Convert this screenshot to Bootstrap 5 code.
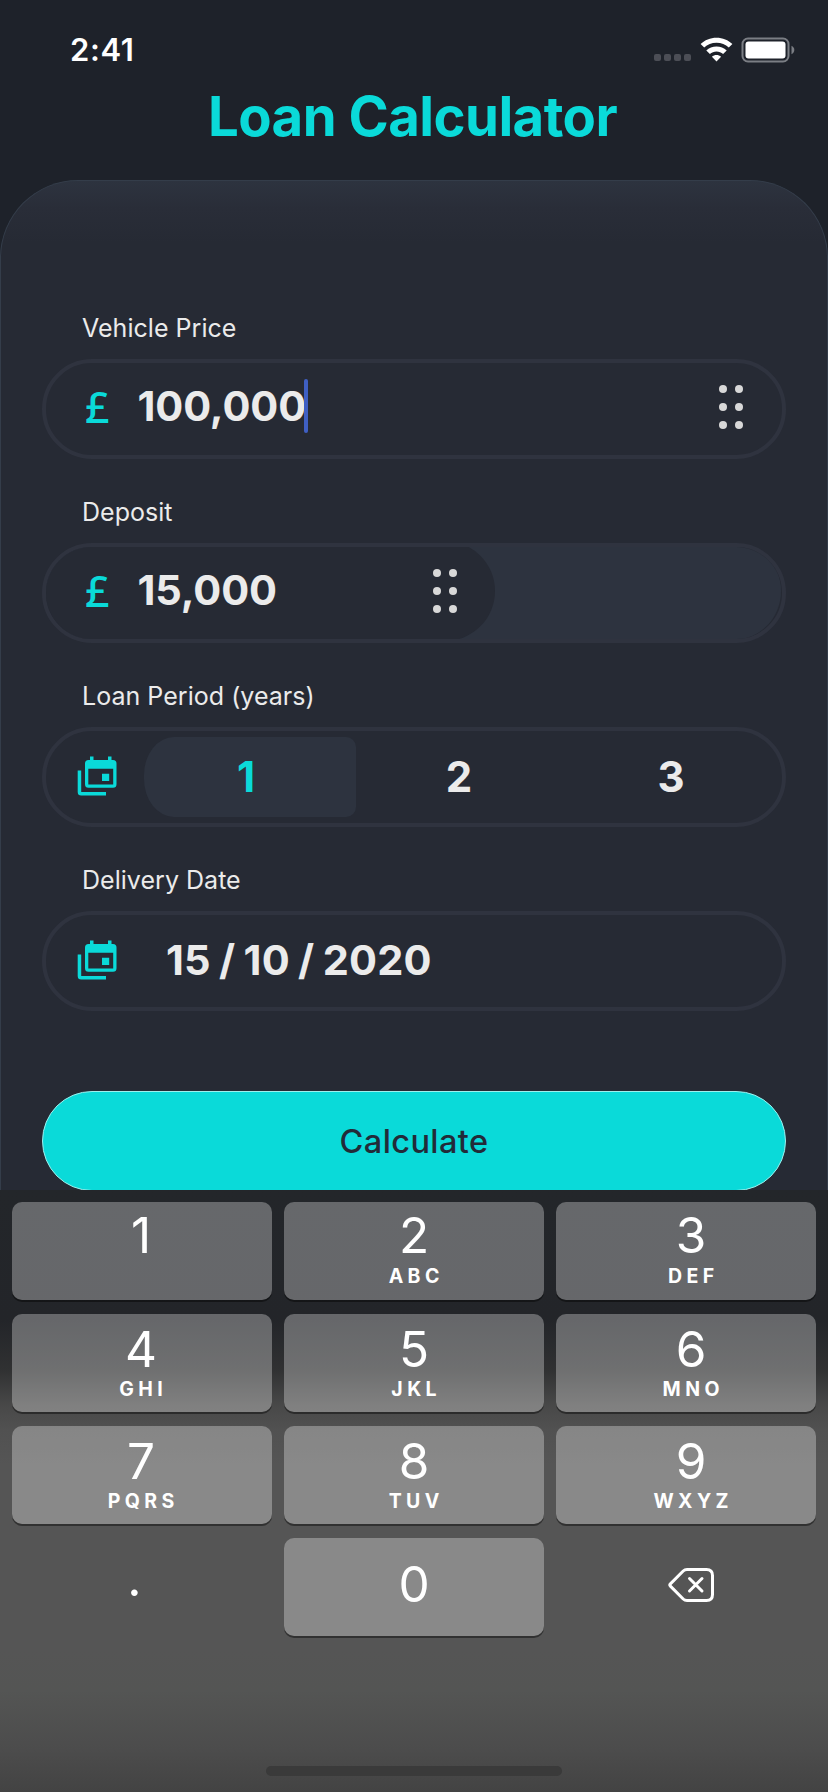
<!DOCTYPE html>
<html lang="en">
<head>
<meta charset="utf-8">
<meta name="viewport" content="width=device-width, initial-scale=1">
<title>Loan Calculator</title>
<link href="https://cdn.jsdelivr.net/npm/bootstrap@5.3.0/dist/css/bootstrap.min.css" rel="stylesheet">
<style>
  body { background: #1e222a; font-family: Inter, "Liberation Sans", sans-serif; color: #ebebeb; }
  .phone { height: 1792px; }
  .status-bar { height: 86px; padding: 14px 33px 0 70px; color: #fff; }
  .clock { font-size: 31px; font-weight: 600; line-height: 40px; letter-spacing: .6px; }
  .signal { gap: 3px; margin: 15px 9px 0 0; }
  .signal i { width: 7px; height: 7px; border-radius: 2px; background: #4c4e56; }
  .app-title { height: 94px; font-size: 54.5px; font-weight: 700; line-height: 60px; color: #0adad9; letter-spacing: -.55px; padding-right: 3px; }
  .sheet { border: 1px solid #343d4a; border-bottom: 0; border-radius: 78px 78px 0 0; padding: 131px 41px 0; min-height: 0;
    background: #262a34 linear-gradient(#2d333f 0, #292d38 28px, #262a34 62px) no-repeat; }
  .field-label { font-size: 25px; line-height: 32px; margin: 0 0 15px 40px; letter-spacing: .03px; }
  .field { margin-bottom: 37px; }
  .field-box { height: 100px; border: 4px solid #2f333f; border-radius: 50px; }
  .icon-col { width: 90px; padding: 0 0 2px 31px; flex: none; }
  .icon-col.wide { width: 98px; }
  .pound { font-family: "Noto Sans", sans-serif; font-size: 43px; font-weight: 500; line-height: 60px; color: #0adad9; padding: 0 0 5px 39px; }
  .amount { font-size: 41.5px; font-weight: 700; line-height: 54px; margin-left: 1.5px; padding-bottom: 6px; letter-spacing: -.1px; }
  .caret { width: 4px; height: 54px; border-radius: 2px; background: #3f5fc3; margin: 0 0 6px -2px; }
  .slider-rest { top: -6px; left: 0; right: 1px; height: 100px; border-radius: 50px; background: #2d333f; }
  .slider-fill { top: -6px; left: 0; width: 449px; height: 100px; border-radius: 0 50px 50px 0; background: #262a34; }
  .slider-content { width: 449px; }
  .grip { margin: 0 38px 4px 0; }
  .slider-content .grip { margin-right: 37px; }
  .seg { width: 212px; height: 80px; line-height: 79px; padding-right: 6px; font-size: 42px; font-weight: 700; }
  .seg.active { background: #2d333f; color: #0adad9; padding-right: 8px; border-radius: 30px 10px 10px 30px / 38px 10px 10px 38px; }
  .date { font-size: 41.5px; font-weight: 700; line-height: 54px; padding-bottom: 2px; margin-left: 30px; word-spacing: -1.8px; letter-spacing: .2px; }
  .calc-btn { height: 100px; margin-top: 43px; border: 1px solid #9df0ee; border-radius: 50px; background: #0adad9; color: #222b38; font-size: 32.5px; font-weight: 500; letter-spacing: .4px; padding: 2px 0 0; flex: none; }
  .keypad { height: 602px; padding: 12px 12px 0; color: #fff;
    background: linear-gradient(#23262a 0, #232529 130px, #303132 180px, #484848 215px, #515151 240px, #555 275px, #555 460px, #545554 500px, #4c4c4c 560px, #434343 602px); }
  .keys { display: grid; grid-template-columns: repeat(3, 260px); grid-auto-rows: 98px; gap: 14px 12px; }
  .key { border-radius: 10px; background: rgba(255,255,255,.305); box-shadow: 0 2px 0 rgba(0,0,0,.42); padding-top: 5px; }
  .key.plain { background: none; box-shadow: none; }
  .key:nth-child(-n+3) { padding-top: 3px; }
  .key:nth-child(-n+3) .letters { margin-top: -1px; }
  .key:nth-child(3n+1) { padding-right: 2px; }
  .key:nth-child(3n) { padding-left: 10px; }
  .key.zero { padding-top: 16px; }
  .key.point { padding: 10px 15px 0 0; }
  .digit { font-size: 49.5px; font-weight: 400; line-height: 60px; }
  .letters { font-size: 19.5px; font-weight: 700; line-height: 24px; letter-spacing: 4.4px; margin-right: -4.4px; margin-top: -2px; }
  .home { width: 296px; height: 10px; border-radius: 5px; background: #3a3a3a; margin-bottom: 16px; }
</style>
</head>
<body>
<div class="phone d-flex flex-column overflow-hidden">
  <header>
    <div class="status-bar d-flex align-items-center justify-content-between">
      <span class="clock">2:41</span>
      <div class="d-flex align-items-center">
        <span class="signal d-flex"><i></i><i></i><i></i><i></i></span>
        <svg width="33" height="26" viewBox="0 0 33 26" fill="#fff"><path d="M16.5 .7C22.700 .7 28.300 3 32.400 7L28.800 10.600C25.600 7.500 21.300 5.800 16.500 5.800S7.400 7.500 4.200 10.600L.6 7C4.700 3 10.300 .7 16.500 .7ZM16.500 9.500C20.300 9.500 24 11 26.700 13.500L23.100 17.100C21.300 15.400 19 14.500 16.500 14.500S11.700 15.400 9.900 17.100L6.300 13.500C9 11 12.700 9.500 16.500 9.500ZM16.500 18.100C18.200 18.100 19.800 18.700 21.100 19.800L16.500 24.500L11.900 19.800C13.200 18.700 14.800 18.100 16.500 18.100Z"/></svg>
        <svg class="ms-2" width="54" height="27" viewBox="0 0 54 27"><rect x="1.500" y="1.500" width="46" height="23" rx="5.500" fill="none" stroke="#7b7e84" stroke-width="2"/><rect x="4.500" y="4.500" width="40" height="17" rx="3" fill="#fff"/><path d="M50.500 8.800C52.200 9.500 53.300 11.100 53.300 13S52.200 16.500 50.500 17.200Z" fill="#7b7e84"/></svg>
      </div>
    </div>
    <h1 class="app-title text-center m-0">Loan Calculator</h1>
  </header>

  <main class="sheet flex-grow-1 d-flex flex-column overflow-hidden">
    <section class="field">
      <div class="field-label">Vehicle Price</div>
      <div class="field-box d-flex align-items-center">
        <span class="icon-col pound">£</span><span class="amount">100,000</span><span class="caret"></span>
        <svg class="grip ms-auto" width="26" height="46" fill="#d8d8d8"><circle cx="5" cy="5" r="4"/><circle cx="21" cy="5" r="4"/><circle cx="5" cy="23" r="4"/><circle cx="21" cy="23" r="4"/><circle cx="5" cy="41" r="4"/><circle cx="21" cy="41" r="4"/></svg>
      </div>
    </section>

    <section class="field">
      <div class="field-label">Deposit</div>
      <div class="field-box position-relative overflow-hidden">
        <div class="slider-rest position-absolute"></div>
        <div class="slider-fill position-absolute"></div>
        <div class="slider-content position-relative d-flex align-items-center h-100">
          <span class="icon-col pound">£</span><span class="amount">15,000</span>
          <svg class="grip ms-auto" width="26" height="46" fill="#d8d8d8"><circle cx="5" cy="5" r="4"/><circle cx="21" cy="5" r="4"/><circle cx="5" cy="23" r="4"/><circle cx="21" cy="23" r="4"/><circle cx="5" cy="41" r="4"/><circle cx="21" cy="41" r="4"/></svg>
        </div>
      </div>
    </section>

    <section class="field">
      <div class="field-label">Loan Period (years)</div>
      <div class="field-box d-flex align-items-center">
        <span class="icon-col wide d-flex"><svg width="40" height="40" viewBox="0 0 40 40" fill="#0adad9"><path fill-rule="evenodd" d="M13 .5h3.500V4H31V.5h3.500V4h1.500a3.500 3.500 0 0 1 3.500 3.500V28.300a3.500 3.500 0 0 1-3.500 3.500H11.500A3.500 3.500 0 0 1 8 28.300V7.500A3.500 3.500 0 0 1 11.500 4H13ZM11.300 12.800V28.500H36.200V12.800Z"/><path d="M25 17.800h7.200v7.200H25ZM.7 14.500H4.200V36H29V39.500H4.200A3.500 3.500 0 0 1 .7 36Z"/></svg></span>
        <span class="seg active text-center">1</span><span class="seg text-center">2</span><span class="seg text-center">3</span>
      </div>
    </section>

    <section class="field">
      <div class="field-label">Delivery Date</div>
      <div class="field-box d-flex align-items-center">
        <span class="icon-col d-flex"><svg width="40" height="40" viewBox="0 0 40 40" fill="#0adad9"><path fill-rule="evenodd" d="M13 .5h3.500V4H31V.5h3.500V4h1.500a3.500 3.500 0 0 1 3.500 3.500V28.300a3.500 3.500 0 0 1-3.500 3.500H11.500A3.500 3.500 0 0 1 8 28.300V7.500A3.500 3.500 0 0 1 11.500 4H13ZM11.300 12.800V28.500H36.200V12.800Z"/><path d="M25 17.800h7.200v7.200H25ZM.7 14.500H4.200V36H29V39.500H4.200A3.500 3.500 0 0 1 .7 36Z"/></svg></span>
        <span class="date">15 / 10 / 2020</span>
      </div>
    </section>

    <button class="calc-btn btn w-100">Calculate</button>
  </main>

  <footer class="keypad d-flex flex-column justify-content-between align-items-center">
    <div class="keys text-center">
      <div class="key"><div class="digit">1</div></div>
      <div class="key"><div class="digit">2</div><div class="letters">ABC</div></div>
      <div class="key"><div class="digit">3</div><div class="letters">DEF</div></div>
      <div class="key"><div class="digit">4</div><div class="letters">GHI</div></div>
      <div class="key"><div class="digit">5</div><div class="letters">JKL</div></div>
      <div class="key"><div class="digit">6</div><div class="letters">MNO</div></div>
      <div class="key"><div class="digit">7</div><div class="letters">PQRS</div></div>
      <div class="key"><div class="digit">8</div><div class="letters">TUV</div></div>
      <div class="key"><div class="digit">9</div><div class="letters">WXYZ</div></div>
      <div class="key plain point d-flex justify-content-center"><div class="digit">.</div></div>
      <div class="key zero"><div class="digit">0</div></div>
      <div class="key plain d-flex align-items-center justify-content-center pt-0 pb-1">
        <svg width="48" height="36" viewBox="0 0 48 36" fill="none" stroke="#fff" stroke-width="3" stroke-linecap="round" stroke-linejoin="round"><path d="M20 2.500H39.500Q45.500 2.500 45.500 8.500V27.500Q45.500 33.500 39.500 33.500H20Q17.800 33.500 16.200 32L3.400 19.100Q2.300 18 3.400 16.900L16.200 4Q17.800 2.500 20 2.500Z"/><path d="M22.500 11.500L35 24M35 11.500L22.500 24"/></svg>
      </div>
    </div>
    <div class="home"></div>
  </footer>
</div>
<script src="https://cdn.jsdelivr.net/npm/bootstrap@5.3.0/dist/js/bootstrap.bundle.min.js"></script>
</body>
</html>
